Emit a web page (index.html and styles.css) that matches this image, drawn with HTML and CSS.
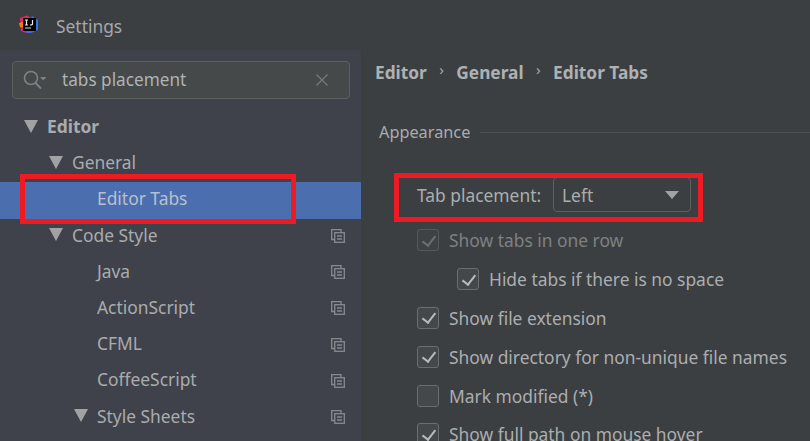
FILE: index.html
```html
<!DOCTYPE html>
<html lang="en">
<head>
<meta charset="utf-8">
<title>Settings</title>
<link rel="stylesheet" href="styles.css">
</head>
<body>
<div class="window">
  <header class="titlebar">
    <svg class="logo" width="20" height="20" viewBox="0 0 20 20">
      <path d="M1 3 L8 0.5 L12 3 L5 17 L2 16 Z" fill="#f0245f"/>
      <path d="M0 8 L4 7 L4 12 L1 12 Z" fill="#f97a12"/>
      <path d="M13 1 L19 5 L19 15 L12 18 L6 18 Z" fill="#3b6fe8"/>
      <path d="M3 13 L8 13 L8 18 L4 17 Z" fill="#a733a8"/>
      <rect x="4" y="3" width="13" height="13" fill="#000"/>
      <rect x="6" y="12.5" width="6" height="1" fill="#ddd"/>
      <path d="M6 5 H9 M7.5 5 V10 M6 10 H9 M13.5 5 V9 Q13.5 10 11 10" stroke="#eee" stroke-width="1.2" fill="none"/>
    </svg>
    <span class="title">Settings</span>
  </header>
  <div class="body">
    <aside class="sidebar">
      <div class="search">
        <svg class="search-icon" width="28" height="26" viewBox="0 0 28 26">
          <circle cx="10" cy="11" r="6.5" fill="none" stroke="#7d8285" stroke-width="1.6"/>
          <path d="M14.5 16 L20 21.5" stroke="#7d8285" stroke-width="1.8"/>
          <path d="M19 10 H25.5 L22.2 13.5 Z" fill="#7d8285"/>
        </svg>
        <span class="search-text">tabs placement</span>
        <svg class="search-clear" width="12" height="12" viewBox="0 0 12 12">
          <path d="M0.5 0.5 L11.5 11.5 M11.5 0.5 L0.5 11.5" stroke="#75797c" stroke-width="1.3"/>
        </svg>
      </div>
      <ul class="tree">
        <li class="node level-0 bold"><i class="arrow"></i><span>Editor</span></li>
        <li class="node level-1"><i class="arrow"></i><span>General</span></li>
        <li class="node level-2 selected"><span>Editor Tabs</span></li>
        <li class="node level-1"><i class="arrow"></i><span>Code Style</span><svg class="copy" viewBox="0 0 14 14"><use href="#copy"/></svg></li>
        <li class="node level-2"><span>Java</span><svg class="copy" viewBox="0 0 14 14"><use href="#copy"/></svg></li>
        <li class="node level-2"><span>ActionScript</span><svg class="copy" viewBox="0 0 14 14"><use href="#copy"/></svg></li>
        <li class="node level-2"><span>CFML</span><svg class="copy" viewBox="0 0 14 14"><use href="#copy"/></svg></li>
        <li class="node level-2"><span>CoffeeScript</span><svg class="copy" viewBox="0 0 14 14"><use href="#copy"/></svg></li>
        <li class="node level-2 has-arrow"><i class="arrow"></i><span>Style Sheets</span><svg class="copy" viewBox="0 0 14 14"><use href="#copy"/></svg></li>
      </ul>
      <svg class="defs" width="0" height="0">
        <defs>
          <g id="copy" fill="none" stroke="#868b8f" stroke-width="1.3">
            <path d="M3 10.5 H0.7 V0.7 H10 V3"/>
            <rect x="3.7" y="3.7" width="9.6" height="9.6"/>
            <path d="M6 7 H11 M6 10 H11"/>
          </g>
        </defs>
      </svg>
    </aside>
    <main class="content">
      <nav class="crumbs">
        <span>Editor</span><b class="sep">›</b><span>General</span><b class="sep">›</b><span>Editor Tabs</span>
      </nav>
      <div class="group-head"><span>Appearance</span><hr class="rule"></div>
      <div class="placement">
        <span class="placement-label">Tab placement:</span>
        <div class="select"><span>Left</span><i class="select-arrow"></i></div>
      </div>
      <ul class="options">
        <li class="option disabled"><i class="box on"></i><span>Show tabs in one row</span></li>
        <li class="option nested"><i class="box on"></i><span>Hide tabs if there is no space</span></li>
        <li class="option"><i class="box on"></i><span>Show file extension</span></li>
        <li class="option"><i class="box on"></i><span>Show directory for non-unique file names</span></li>
        <li class="option"><i class="box"></i><span>Mark modified (*)</span></li>
        <li class="option"><i class="box on"></i><span>Show full path on mouse hover</span></li>
      </ul>
    </main>
  </div>
  <div class="mark mark-tree"></div>
  <div class="mark mark-placement"></div>
</div>
</body>
</html>
```
FILE: styles.css
```css
* { box-sizing: border-box; }
html, body { margin: 0; padding: 0; height: 100%; overflow: hidden; }
body { background: #3c3f41; color: #aeb1b3; font-family: "Noto Sans", "Liberation Sans", sans-serif; font-size: 17.4px; }
ul { list-style: none; margin: 0; padding: 0; }
.window { position: relative; width: 810px; height: 441px; overflow: hidden; display: flex; flex-direction: column; }
.titlebar { height: 50px; flex: none; display: flex; align-items: center; padding: 3px 0 0 19px; background: #3c3f41; }
.logo { flex: none; margin-bottom: 4px; }
.title { margin-left: 17px; color: #a5a8aa; line-height: 1; }
.body { flex: 1; display: flex; min-height: 0; }
.sidebar { width: 361px; flex: none; background: #3f424b; padding-top: 11px; }
.search { height: 38px; margin: 0 11px 0 12px; display: flex; align-items: center; background: #45494a; border: 1.5px solid #5c5f60; border-radius: 4px; padding: 0 21px 2px 8px; }
.search-icon { flex: none; margin-top: 2px; }
.search-text { flex: 1; margin-left: 13px; color: #b0b3b5; font-size: 17.2px; }
.search-clear { flex: none; margin-top: 2px; }
.tree { margin-top: 11px; }
.node { height: 36.2px; display: flex; align-items: center; position: relative; color: #a9acae; white-space: nowrap; padding-bottom: 4px; }
.node.bold { font-weight: 700; }
.level-0 { padding-left: 24px; }
.level-1 { padding-left: 49px; }
.level-2 { padding-left: 97px; }
.level-2.has-arrow { padding-left: 74px; }
.arrow { width: 0; height: 0; flex: none; border-left: 7.5px solid transparent; border-right: 7.5px solid transparent; border-top: 13px solid #a0a2a4; margin-right: 9px; }
.selected { background: #4b6eaf; color: #b9c0cc; }
.copy { width: 14px; height: 14px; position: absolute; left: 331px; top: 10.5px; }
.defs { position: absolute; }
.content { flex: 1; min-width: 0; padding: 9px 0 0 14px; }
.crumbs { display: flex; align-items: center; height: 28px; font-weight: 700; font-size: 17.3px; color: #aeb1b3; transform: translateY(-1px); }
.sep { font-weight: 400; width: 29.5px; text-align: center; font-size: 15px; color: #a5a8aa; transform: translateY(-3px); }
.group-head { display: flex; align-items: center; margin: 33px 0 0 4px; height: 24px; font-size: 16.3px; color: #a9acae; }
.rule { flex: 1; border: 0; border-top: 1px solid #505354; margin: 0 0 0 10px; }
.placement { display: flex; align-items: center; margin: 33px 0 0 42px; height: 35px; }
.placement-label { width: 136px; flex: none; color: #abaeb0; }
.select { width: 138px; height: 35px; display: flex; align-items: center; justify-content: space-between; border: 1.5px solid #5e6162; border-radius: 4px; padding: 0 11px 0 8px; color: #abaeb0; }
.select-arrow { width: 0; height: 0; border-left: 7px solid transparent; border-right: 7px solid transparent; border-top: 8px solid #a0a2a4; }
.options { margin: 9px 0 0 42px; }
.option { height: 38.8px; display: flex; align-items: center; white-space: nowrap; color: #abaeb0; }
.option.disabled { color: #7e8183; }
.option.nested { margin-left: 40px; }
.box { width: 22px; height: 22px; flex: none; margin-right: 10px; border: 1.5px solid #6b6e70; border-radius: 3px; background: #45484a; position: relative; }
.box.on::after { content: ""; position: absolute; left: 6.5px; top: 2.5px; width: 6px; height: 11px; border: solid #b8babc; border-width: 0 2.5px 2.5px 0; transform: rotate(38deg); }
.disabled .box { background: #3f4244; border-color: #55585a; }
.disabled .box.on::after { border-color: #6d7072; }
.mark { position: absolute; border: 5px solid #ed1c24; }
.mark-tree { left: 20px; top: 174px; width: 276px; height: 50px; }
.mark-placement { left: 394px; top: 173px; width: 309px; height: 49px; }
```
